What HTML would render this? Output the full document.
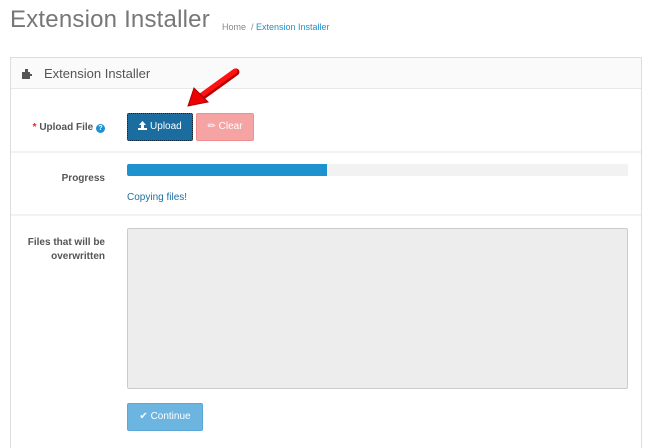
<!DOCTYPE html>
<html><head><style>
body{margin:0;width:650px;height:437px;background:#fff;font-family:"Liberation Sans",sans-serif;position:relative;overflow:hidden}
.a{position:absolute}
h1{position:absolute;left:10px;top:6px;margin:0;font-weight:normal;font-size:24px;color:#777;letter-spacing:0.2px}
.bc{left:222px;top:22px;font-size:9px;color:#888}
.bc span{color:#1e91cf}
.panel{left:10px;top:57px;width:630px;height:390px;border:1px solid #ddd;border-bottom:none}
.ph{left:0;top:0;width:630px;height:30px;background:#fafafa;border-bottom:1px solid #e8e8e8;font-size:13px;color:#555}
.lbl{font-size:10px;font-weight:bold;color:#555;text-align:right}
.hr{height:2px;background:#f2f2f2;width:630px;left:0}
.btn{font-size:10px;color:#fff;border-radius:2px;text-align:center;line-height:26px}
</style></head><body>
<h1>Extension Installer</h1>
<div class="a bc">Home &nbsp;/ <span>Extension Installer</span></div>
<div class="a panel">
 <div class="a ph"><svg class="a" style="left:11px;top:10px" width="11" height="11"><path d="M0 4h3V1h3v3h2v2h2v2H8v3H0z" fill="#555"/></svg><span class="a" style="left:33px;top:8px">Extension Installer</span></div>
 <div class="a lbl" style="left:10px;top:64px;width:84px"><span style="color:#e22">*</span> Upload File <span style="display:inline-block;width:9px;height:9px;border-radius:50%;background:#1e91cf;color:#fff;font-size:7px;line-height:9px;text-align:center;vertical-align:0px">?</span></div>
 <div class="a btn" style="left:116px;top:55px;width:64px;height:26px;background:#1b6da0;border:1px dotted #123"><svg width="9" height="9" style="vertical-align:-1px"><path d="M4.5 0L8 4H6v3H3V4H1z M0 7h9v2H0z" fill="#fff"/></svg> Upload</div>
 <div class="a btn" style="left:185px;top:55px;width:56px;height:26px;background:#f5a3a3;border:1px solid #f08d8d">&#9999; Clear</div>
 <div class="a hr" style="top:93px"></div>
 <div class="a lbl" style="left:10px;top:115px;width:84px">Progress</div>
 <div class="a" style="left:116px;top:106px;width:501px;height:12px;background:#f2f2f2;border-radius:2px"></div>
 <div class="a" style="left:116px;top:106px;width:200px;height:12px;background:#1e91cf;border-radius:2px 0 0 2px"></div>
 <div class="a" style="left:116px;top:134px;font-size:10px;color:#1e6ea0">Copying files!</div>
 <div class="a hr" style="top:156px"></div>
 <div class="a lbl" style="left:10px;top:178px;width:84px;line-height:14px">Files that will be overwritten</div>
 <div class="a" style="left:116px;top:170px;width:499px;height:159px;background:#ededed;border:1px solid #ccc;border-radius:2px"></div>
 <div class="a btn" style="left:116px;top:345px;width:74px;height:26px;background:#6bb5e0;border:1px solid #5aa8d8">&#10004; Continue</div>
</div>
<svg class="a" style="left:180px;top:66px" width="62" height="48"><path d="M56 6 L20 32" stroke="#b00" stroke-width="7" stroke-linecap="round"/><path d="M55 5 L19 31" stroke="#f11" stroke-width="5" stroke-linecap="round"/><polygon points="8,40 14,22 28,36" fill="#e00" stroke="#a00" stroke-width="1"/></svg>
</body></html>
